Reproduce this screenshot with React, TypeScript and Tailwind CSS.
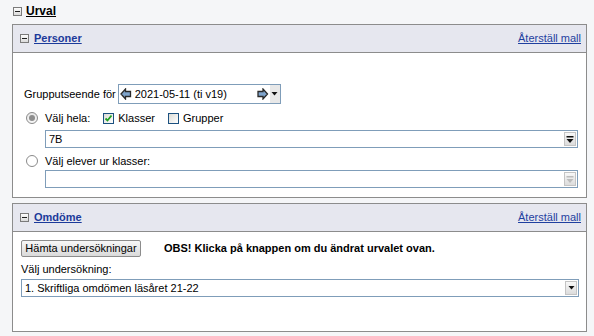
import React from 'react';

const font = "font-['Tahoma','Liberation_Sans',sans-serif]";

function MinusBox() {
  return (
    <svg width="9" height="9" viewBox="0 0 9 9" className="shrink-0">
      <defs>
        <linearGradient id="mb" x1="0" y1="0" x2="0" y2="1">
          <stop offset="0" stopColor="#ffffff" />
          <stop offset="1" stopColor="#d8d8d8" />
        </linearGradient>
      </defs>
      <rect x="0.5" y="0.5" width="8" height="8" fill="url(#mb)" stroke="#7b7b7b" />
      <rect x="2" y="4" width="5" height="1" fill="#1e1e1e" />
    </svg>
  );
}

function Arrow({ dir }: { dir: 'left' | 'right' }) {
  const pts =
    dir === 'left'
      ? '1,6 5.5,1 5.5,3.5 10.5,3.5 10.5,8.5 5.5,8.5 5.5,11'
      : '10.5,6 6,1 6,3.5 1,3.5 1,8.5 6,8.5 6,11';
  return (
    <svg width="12" height="12" viewBox="0 0 12 12" className="shrink-0">
      <polygon points={pts} fill="#7fa4cc" stroke="#2a2a2a" strokeWidth="1.3" strokeLinejoin="miter" />
    </svg>
  );
}

function Triangle({ color = '#111' }: { color?: string }) {
  return (
    <svg width="7" height="4" viewBox="0 0 7 4">
      <polygon points="0.5,0 6.5,0 3.5,3.5" fill={color} />
    </svg>
  );
}

function BarArrow({ color = '#111' }: { color?: string }) {
  return (
    <svg width="8" height="9" viewBox="0 0 8 9">
      <rect x="0.5" y="1" width="7" height="1.5" fill={color} />
      <polygon points="0.5,4 7.5,4 4,8" fill={color} />
    </svg>
  );
}

function SelectBox({
  text,
  className,
  icon,
}: {
  text?: string;
  className: string;
  icon: React.ReactNode;
}) {
  return (
    <div className={`flex h-[18px] items-center border border-[#7f9db9] bg-white ${className}`}>
      <span className="flex-1 pl-[3px] text-[11px] leading-none text-black">{text}</span>
      <div className="mr-[1px] flex h-[14px] w-[12px] items-center justify-center border border-[#c4c4c4] bg-gradient-to-b from-[#f8f8f8] to-[#dcdcdc]">
        {icon}
      </div>
    </div>
  );
}

function Radio({ checked }: { checked?: boolean }) {
  return (
    <div
      className={`flex h-[12px] w-[12px] shrink-0 items-center justify-center rounded-full border border-[#8a8a8a] ${
        checked ? 'bg-gradient-to-b from-[#e6e6e6] to-[#f8f8f8]' : 'bg-white'
      }`}
    >
      {checked && <div className="h-[6px] w-[6px] rounded-full bg-[#8d8d8d]" />}
    </div>
  );
}

function Checkbox({ checked }: { checked?: boolean }) {
  return (
    <div className="relative h-[11px] w-[11px] shrink-0 border border-[#1c5180] bg-gradient-to-br from-[#dcdcd6] to-white">
      {checked && (
        <svg width="9" height="9" viewBox="0 0 9 9" className="absolute left-0 top-0">
          <path d="M1.5 4.5 L3.5 6.5 L7.5 1.5" fill="none" stroke="#21a121" strokeWidth="1.8" />
        </svg>
      )}
    </div>
  );
}

function PanelHeader({ title }: { title: string }) {
  return (
    <div className="flex h-[28px] items-center justify-between border-b border-[#8c8c8c] bg-[#e6e7ef] pl-[7px] pr-[5px]">
      <div className="flex items-center gap-[5px]">
        <MinusBox />
        <span className="text-[11px] font-bold text-[#1b3a9a] underline">{title}</span>
      </div>
      <span className="text-[11px] text-[#1f3f9f] underline">Återställ mall</span>
    </div>
  );
}

export default function App() {
  return (
    <div className={`h-[336px] w-[594px] overflow-hidden bg-[#f5f6f8] text-[11px] text-black ${font}`}>
      {/* Urval */}
      <div className="flex h-[24px] items-center gap-[4px] pb-[2px] pl-[13px]">
        <MinusBox />
        <span className="text-[12px] font-bold underline">Urval</span>
      </div>

      {/* Personer */}
      <div className="ml-[12px] w-[575px] border border-[#8c8c8c] bg-white">
        <PanelHeader title="Personer" />
        <div className="h-[144px] pl-[11px] pt-[31px]">
          <div className="flex h-[20px] items-center gap-[2px]">
            <span>Grupputseende för</span>
            <div className="flex h-[20px] w-[163px] items-center border border-[#7f9db9] bg-white pl-[1px]">
              <Arrow dir="left" />
              <span className="ml-[3px] flex-1">2021-05-11 (ti v19)</span>
              <Arrow dir="right" />
              <div className="ml-[1px] flex h-[18px] w-[10px] items-center justify-center bg-[#e8e8e8]">
                <Triangle />
              </div>
            </div>
          </div>

          <div className="mt-[6px] flex h-[16px] items-center pl-[2px]">
            <Radio checked />
            <span className="ml-[7px]">Välj hela:</span>
            <div className="ml-[13px]">
              <Checkbox checked />
            </div>
            <span className="ml-[4px]">Klasser</span>
            <div className="ml-[13px]">
              <Checkbox />
            </div>
            <span className="ml-[4px]">Grupper</span>
          </div>

          <SelectBox text="7B" className="ml-[21px] mt-[4px] w-[533px]" icon={<BarArrow />} />

          <div className="mt-[5px] flex h-[16px] items-center pl-[2px]">
            <Radio />
            <span className="ml-[7px]">Välj elever ur klasser:</span>
          </div>

          <SelectBox className="ml-[21px] mt-[1px] w-[533px]" icon={<BarArrow color="#bcbcbc" />} />
        </div>
      </div>

      {/* Omdöme */}
      <div className="ml-[12px] mt-[5px] w-[575px] border border-[#8c8c8c] bg-white">
        <PanelHeader title="Omdöme" />
        <div className="h-[99px] pl-[8px] pt-[8px]">
          <div className="flex items-center">
            <button className="h-[17px] w-[120px] rounded-[2px] border border-[#8c8c8c] bg-gradient-to-b from-[#f7f7f7] to-[#dadada] text-[11px] leading-none">
              Hämta undersökningar
            </button>
            <span className="ml-[23px] font-bold">OBS! Klicka på knappen om du ändrat urvalet ovan.</span>
          </div>
          <div className="mt-[5px] flex h-[14px] items-center">Välj undersökning:</div>
          <SelectBox
            text="1. Skriftliga omdömen läsåret 21-22"
            className="mt-[3px] w-[558px]"
            icon={<Triangle />}
          />
        </div>
      </div>
    </div>
  );
}
